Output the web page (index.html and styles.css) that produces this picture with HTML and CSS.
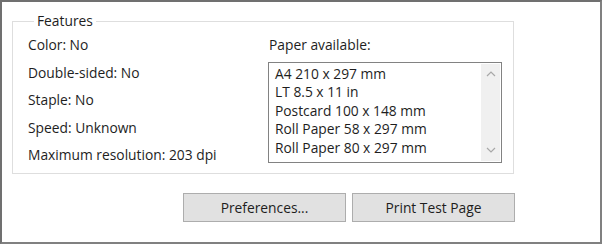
FILE: index.html
```html
<!DOCTYPE html>
<html lang="en">

<head>
    <meta charset="utf-8">
    <title>Printer properties</title>
    <link rel="stylesheet" href="styles.css">
</head>

<body>
    <div class="vindue">
        <fieldset class="features">
            <legend>Features</legend>
            <div class="kolonner">
                <div class="venstre">
                    <p>Color: No</p>
                    <p>Double-sided: No</p>
                    <p>Staple: No</p>
                    <p>Speed: Unknown</p>
                    <p>Maximum resolution: 203 dpi</p>
                </div>
                <div class="hoejre">
                    <p class="overskrift">Paper available:</p>
                    <div class="liste">
                        <ul>
                            <li>A4 210 x 297 mm</li>
                            <li>LT 8.5 x 11 in</li>
                            <li>Postcard 100 x 148 mm</li>
                            <li>Roll Paper 58 x 297 mm</li>
                            <li>Roll Paper 80 x 297 mm</li>
                        </ul>
                        <div class="scroll">
                            <svg width="10" height="6" viewBox="0 0 10 6"><path d="M1 5 L5 1 L9 5" fill="none" stroke="#a8a8a8" stroke-width="1.2"/></svg>
                            <svg width="10" height="6" viewBox="0 0 10 6"><path d="M1 1 L5 5 L9 1" fill="none" stroke="#a8a8a8" stroke-width="1.2"/></svg>
                        </div>
                    </div>
                </div>
            </div>
        </fieldset>

        <div class="knapper">
            <button>Preferences...</button>
            <button>Print Test Page</button>
        </div>
    </div>
</body>

</html>
```

FILE: styles.css
```css
body {
    margin: 0;
    background-color: #ffffff;
    font-family: 'Open Sans', sans-serif;
    font-size: 13.8px;
    color: #1e1e1e;
}

.vindue {
    width: 602px;
    height: 244px;
    box-sizing: border-box;
    border-top: 2px solid #707070;
    border-left: 2px solid #707070;
    border-right: 2px solid #808080;
    border-bottom: 2px solid #808080;
    padding: 0 0 0 10px;
    background-color: #ffffff;
}

.features {
    margin: 11px 0 0 0;
    width: 502px;
    height: 161px;
    box-sizing: border-box;
    border: 1px solid #dedede;
    padding: 0 0 0 15px;
}

.features legend {
    padding: 0 3px;
    margin-left: 6px;
    line-height: 16px;
}

.kolonner {
    display: flex;
}

.venstre {
    width: 241px;
    padding-top: 2px;
}

.venstre p {
    margin: 0;
    line-height: 27.6px;
}

.hoejre p {
    margin: 0;
}

.overskrift {
    line-height: 27.6px;
    padding-top: 2px;
}

.liste {
    display: flex;
    width: 234px;
    height: 101px;
    box-sizing: border-box;
    border: 1px solid #828282;
    margin-top: 3px;
    margin-left: -1px;
}

.liste ul {
    list-style: none;
    margin: 0;
    padding: 2px 0 0 6px;
    flex: 1;
}

.liste li {
    line-height: 18.5px;
}

.scroll {
    width: 19px;
    margin: 1px 1px 1px 0;
    background-color: #f0f0f0;
    display: flex;
    flex-direction: column;
    justify-content: space-between;
    align-items: center;
    padding: 7px 0 8px;
}

.knapper {
    display: flex;
    gap: 6px;
    margin: 19px 0 0 171px;
}

.knapper button {
    width: 163px;
    height: 29px;
    background-color: #e1e1e1;
    border: 1px solid #adadad;
    font-family: 'Open Sans', sans-serif;
    font-size: 13.8px;
    color: #1e1e1e;
    padding: 0;
}
```
